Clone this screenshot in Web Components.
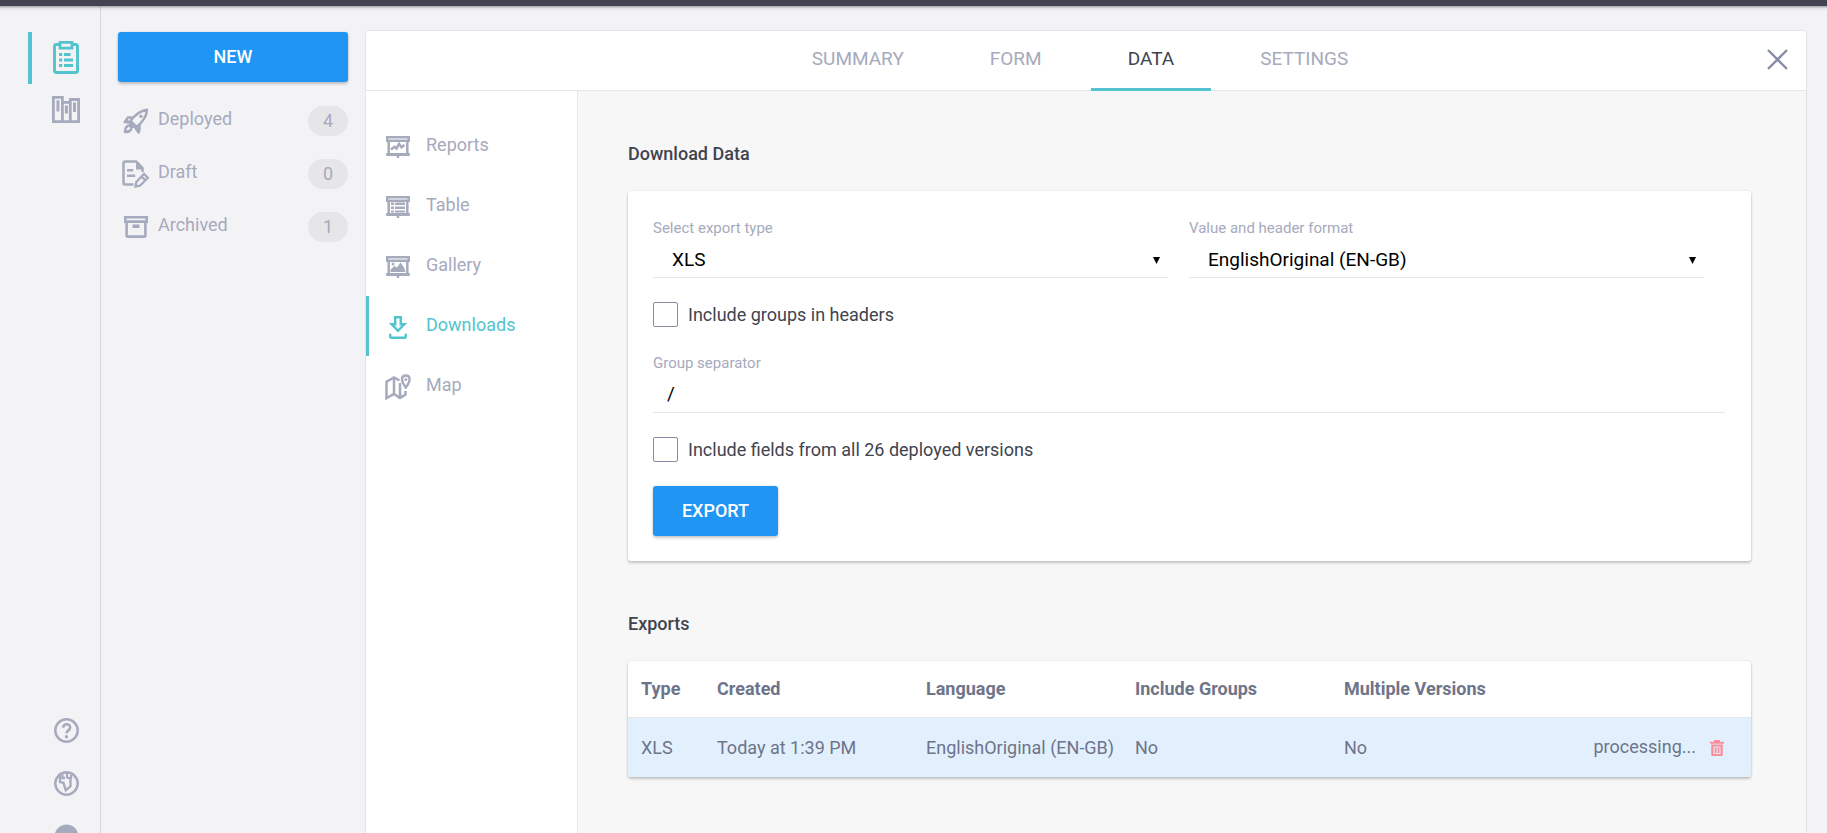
<!DOCTYPE html>
<html lang="en">
<head>
<meta charset="utf-8">
<title>Data – Downloads</title>
<style>
  :root {
    --teal: #52c4cd;
    --blue: #2095f3;
    --muted: #a6aabd;
    --ink: #40444f;
    --slate: #6e748a;
    --line: #e5e6e9;
    --shadow: 0 0 2px rgba(0, 0, 0, .12), 0 2px 3px rgba(0, 0, 0, .2);
  }
  body {
    margin: 0;
    font: 18px/24px Roboto, "Liberation Sans", sans-serif;
    color: var(--ink);
    background: #f3f3f6;
    overflow: hidden;
  }
</style>
</head>
<body>
<app-shell>
  <app-rail slot="rail"></app-rail>
  <form-sidebar slot="sidebar">
    <status-link icon="rocket" count="4">Deployed</status-link>
    <status-link icon="draft" count="0">Draft</status-link>
    <status-link icon="archive" count="1">Archived</status-link>
  </form-sidebar>
  <tab-bar slot="tabs"></tab-bar>
  <side-nav slot="nav">
    <side-link icon="reports">Reports</side-link>
    <side-link icon="table">Table</side-link>
    <side-link icon="gallery">Gallery</side-link>
    <side-link icon="download" active>Downloads</side-link>
    <side-link icon="map">Map</side-link>
  </side-nav>
  <content-section heading="Download Data"><export-form></export-form></content-section>
  <content-section heading="Exports"><exports-table></exports-table></content-section>
</app-shell>

<script>
const board = '<path d="M1.200 1.200h21.600v3.600H1.200zM2.700 4.500V19M21.300 4.500V19" fill="none" stroke="currentColor" stroke-width="2.500"/><path d="M.2 17h23.600v3H13.200v2h-2.400v-2H.2z"/>';
const ICONS = {
  clipboard: [26, 33, '<path d="M7 3.500H3.500Q1.500 3.500 1.500 5.500v24q0 2 2 2h19q2 0 2-2v-24q0-2-2-2H19" fill="none" stroke="currentColor" stroke-width="2.900"/><path d="M7 1.400h12v5.800H7z" fill="none" stroke="currentColor" stroke-width="2.800"/><path d="M6 12h3.200v3H6zm5 0h6.500v3H11zM6 17.500h3.200v3H6zm5 0h9v3h-9zM6 23h3.200v3H6zm5 0h9v3h-9z"/>'],
  library: [28, 27, '<path d="M1.400 1.400h9v24.200h-9zM10.400 6.300h7.900v19.300h-7.900zM18.300 3.500h8.300v22.100h-8.300z" fill="none" stroke="currentColor" stroke-width="2.800"/><path d="M4.500 4.200h2.900v11.300H4.500zM12.900 9.500h3v8h-3zM21 6.500h3v9.500h-3z"/>'],
  help: [25, 25, '<circle cx="12.500" cy="12.500" r="11.200" fill="none" stroke="currentColor" stroke-width="2.500"/><path d="M9.200 9.700q0-3.400 3.500-3.400t3.400 3.200q0 1.600-1.800 2.900t-1.700 3" fill="none" stroke="currentColor" stroke-width="2.600"/><circle cx="12.500" cy="18.700" r="1.700"/>'],
  globe: [25, 25, '<circle cx="12.500" cy="12.500" r="11.200" fill="none" stroke="currentColor" stroke-width="2.500"/><path d="M6 4.500V11l3.500.8 2.300 7.500 4.700-4V7.500L13 6.500V2M8.500 3.500V7h2.500M17 4v4" fill="none" stroke="currentColor" stroke-width="2.300"/>'],
  dot: [25, 25, '<circle cx="12.500" cy="12.500" r="12"/>'],
  rocket: [26, 26, '<path d="M7.500 13Q14.500 3 24 1.700 23.500 11 13.500 19zM9.500 9.500H5L1.700 14l5 .5M16.500 17v4l-.8 3.500-3.500-5M5.500 16.500l4 4M5 17.500q-3 2-3 6.500 4.500.2 6.500-3M3 12l12.500 10" fill="none" stroke="currentColor" stroke-width="2.500" stroke-linejoin="round"/><circle cx="18" cy="8.300" r="1.700"/>'],
  draft: [28, 28, '<path d="M20.500 12V8.500L14 1.500H3q-1.500 0-1.500 1.500v20q0 1.500 1.500 1.500h8.500" fill="none" stroke="currentColor" stroke-width="2.500"/><path d="M14 1h1.500l6 6.500V9.500H14zM5 9h6.200v2.500H5zM5 14.500h8.200V17H5z"/><path d="M13.500 26.500l.8-4.500 7.700-8 3.800 3.700-7.800 8zM19.500 16.500l3.800 3.700" fill="none" stroke="currentColor" stroke-width="2.300"/>'],
  archive: [24, 22, '<path d="M1.300 1.300h21.400v4.300H1.300zM2.600 5.500v13.800q0 1.300 1.300 1.300h16.200q1.300 0 1.300-1.300V5.500" fill="none" stroke="currentColor" stroke-width="2.600"/><path d="M8.500 8.500h7v3.500h-7z"/>'],
  reports: [24, 22, board + '<path d="M5 13.500l3.500-2.700 2 1.700 2.500-4.700 2.500 3.500L18.500 9" fill="none" stroke="currentColor" stroke-width="2.500"/>'],
  table: [24, 22, board + '<path d="M5 6.500h3V9H5zm4 0h10V9H9zm-4 4h3V13H5zm4 0h10V13H9zm-4 4h3v2H5zm4 0h10v2H9z"/>'],
  gallery: [24, 22, board + '<path d="M4.500 16v-2.500l4-3.500 2.500 1.500L14.500 6.500l3.500 5 1.500 4.500z"/><circle cx="7" cy="8" r="1.500"/>'],
  download: [18, 23, '<path d="M6.200 1.300h5.600v7h3.500L9 14.800 2.700 8.300h3.500z" fill="none" stroke="currentColor" stroke-width="2.500"/><path d="M1.200 17.700v2.500q0 1.500 1.500 1.500h12.600q1.500 0 1.500-1.500v-2.500" fill="none" stroke="currentColor" stroke-width="2.400"/>'],
  map: [26, 26, '<path d="M14.500 6.500L9 3.500 1.500 7.700v16.500L9 20l6 4 5.500-3.500V17M9 3.500V20M15 9v15" fill="none" stroke="currentColor" stroke-width="2.500"/><path d="M20.800 13.500Q17 8.500 17 5.300 17 1.500 20.800 1.500t3.800 3.800q0 3.200-3.800 8.200z" fill="none" stroke="currentColor" stroke-width="2.400"/><circle cx="20.800" cy="5.500" r="1.500"/>'],
  close: [21, 21, '<path d="M1 1l19 19M20 1L1 20" stroke="currentColor" stroke-width="2.300"/>'],
  trash: [14, 16, '<path d="M0 1.700h4V0h6v1.700h4v2H0zM1.200 4.500h11.600v10q0 1.500-1.500 1.500H2.700q-1.500 0-1.500-1.500zM3.500 6.500V14h7V6.500z" fill-rule="evenodd"/><path d="M4.700 7.300h1.800v5.900H4.700zm2.900 0h1.800v5.900H7.600z"/>']
};

function define(name, render) {
  customElements.define(name, class extends HTMLElement {
    connectedCallback() {
      if (this.shadowRoot) return;
      const template = document.createElement('template');
      template.innerHTML = render(this);
      this.attachShadow({ mode: 'open' }).append(template.content.cloneNode(true));
    }
  });
}

define('ui-icon', el => {
  const [w, h, body] = ICONS[el.getAttribute('name')];
  return `<style>:host{display:inline-flex;flex:none}svg{display:block}</style>
    <svg width="${w}" height="${h}" viewBox="0 0 ${w} ${h}" fill="currentColor" aria-hidden="true">${body}</svg>`;
});

define('app-shell', () => `
  <style>
    :host { display: flex; height: 100vh; border-top: 6px solid #424453; box-sizing: border-box; position: relative; }
    .top-shadow { position: absolute; inset: 0 0 auto; height: 5px; background: linear-gradient(rgba(0,0,0,.32), rgba(0,0,0,.06) 50%, transparent); }
    .panel { flex: 1; min-width: 0; margin: 25px 21px 0 0; display: grid; grid-template: auto 1fr / 212px 1fr;
      background: #f7f7f8; border-radius: 3px 3px 0 0; box-shadow: 0 0 2px rgba(0, 0, 0, .2); overflow: hidden; }
    .tabs { grid-column: 1 / -1; }
    main { padding: 51px 55px 0 50px; min-width: 0; display: flex; flex-direction: column; gap: 51px; }
  </style>
  <div class="top-shadow"></div>
  <slot name="rail"></slot>
  <slot name="sidebar"></slot>
  <div class="panel">
    <div class="tabs"><slot name="tabs"></slot></div>
    <slot name="nav"></slot>
    <main><slot></slot></main>
  </div>`);

define('app-rail', () => `
  <style>
    :host { display: flex; flex-direction: column; justify-content: space-between; width: 100px; flex: none;
      border-right: 1px solid #d6d7da; overflow: hidden; color: var(--muted); }
    nav { display: flex; flex-direction: column; padding: 26px 0 0 28px; }
    a { display: flex; align-items: center; justify-content: center; height: 52px; box-sizing: border-box; padding-bottom: 2px; color: inherit; border-left: 4px solid transparent; }
    a.active { color: var(--teal); border-color: var(--teal); }
    nav.foot { padding-top: 0; margin-bottom: -31px; }
    .foot a { height: 53px; }
  </style>
  <nav>
    <a class="active" href="#projects" aria-label="Projects"><ui-icon name="clipboard"></ui-icon></a>
    <a href="#library" aria-label="Library"><ui-icon name="library"></ui-icon></a>
  </nav>
  <nav class="foot">
    <a href="#help" aria-label="Help"><ui-icon name="help"></ui-icon></a>
    <a href="#web" aria-label="Website"><ui-icon name="globe"></ui-icon></a>
    <a href="#source" aria-label="Source"><ui-icon name="dot"></ui-icon></a>
  </nav>`);

define('form-sidebar', () => `
  <style>
    :host { display: flex; flex-direction: column; gap: 24px; width: 230px; flex: none; padding: 26px 18px 0 17px; }
    button { height: 50px; padding: 0 0 2px; border: 0; border-radius: 3px; background: var(--blue); color: #fff; font: 500 18px Roboto, sans-serif; box-shadow: var(--shadow); }
    nav { display: flex; flex-direction: column; gap: 23px; }
  </style>
  <button type="button">NEW</button>
  <nav><slot></slot></nav>`);

define('status-link', el => `
  <style>
    :host { display: block; }
    a { display: flex; align-items: center; height: 30px; color: var(--muted); text-decoration: none; }
    .icon { width: 36px; margin-right: 4px; display: flex; justify-content: center; }
    .text { flex: 1; padding-bottom: 4px; }
    .count { width: 40px; line-height: 30px; border-radius: 15px; background: #e6e6e8; text-align: center; }
  </style>
  <a href="#list"><span class="icon"><ui-icon name="${el.getAttribute('icon')}"></ui-icon></span>
  <span class="text"><slot></slot></span><span class="count">${el.getAttribute('count')}</span></a>`);

define('tab-bar', () => `
  <style>
    :host { display: flex; align-items: stretch; height: 60px; box-sizing: border-box; background: #fff; box-shadow: inset 0 -1px var(--line); position: relative; }
    nav { flex: 1; display: flex; justify-content: center; }
    a { padding: 0 37px; margin-right: 12px; line-height: 56px; font-size: 19px; color: var(--muted); text-decoration: none; border-bottom: 3px solid transparent; }
    a.active { color: var(--ink); border-color: var(--teal); }
    button { position: absolute; right: 14px; top: 13px; width: 30px; height: 30px; padding: 0; border: 0; background: none; color: #868ca6; display: grid; place-items: center; }
  </style>
  <nav>
    <a href="#summary">SUMMARY</a><a href="#form">FORM</a><a class="active" href="#data">DATA</a><a href="#settings">SETTINGS</a>
  </nav>
  <button type="button" aria-label="Close"><ui-icon name="close"></ui-icon></button>`);

define('side-nav', () => `
  <style>:host { display: block; padding-top: 25px; background: #fff; border-right: 1px solid var(--line); }</style>
  <nav><slot></slot></nav>`);

define('side-link', el => `
  <style>
    :host { display: block; color: var(--muted); }
    a { display: flex; align-items: center; height: 60px; box-sizing: border-box; border-left: 3px solid transparent; padding-left: 11px; color: inherit; text-decoration: none; }
    :host([active]) { color: var(--teal); }
    :host([active]) a { border-color: var(--teal); }
    .icon { width: 36px; margin-right: 10px; display: flex; justify-content: center; padding-top: 2px; }
    .text { padding-bottom: 3px; }
  </style>
  <a href="#${el.getAttribute('icon')}"><span class="icon"><ui-icon name="${el.getAttribute('icon')}"></ui-icon></span><span class="text"><slot></slot></span></a>`);

define('content-section', el => `
  <style>
    :host { display: block; }
    h2 { margin: 0 0 25px; font-size: 18px; font-weight: 500; line-height: 24px; }
    .card { background: #fff; border-radius: 3px; box-shadow: var(--shadow); overflow: hidden; }
  </style>
  <section><h2>${el.getAttribute('heading')}</h2><div class="card"><slot></slot></div></section>`);

define('export-form', () => `
  <style>
    :host { display: block; padding: 25px; }
    form { display: flex; flex-direction: column; gap: 24px; padding-right: 1px; }
    .row { display: flex; gap: 2%; }
    .row .field { width: 48%; }
    .field { display: flex; flex-direction: column; }
    .field label { font-size: 15px; line-height: 24px; color: var(--muted); }
    select, input[type=text] { appearance: none; height: 38px; box-sizing: border-box; width: 100%; margin: 0; border: 0; border-bottom: 1px solid var(--line);
      border-radius: 0; background: none; color: #000; font: 19px Roboto, sans-serif; outline: 0; }
    select { padding: 2px 19px 0; }
    input[type=text] { padding: 0 14px; }
    .pick { display: grid; }
    .pick > * { grid-area: 1 / 1; }
    .pick svg { place-self: center end; margin-right: 8px; padding-top: 2px; pointer-events: none; }
    .check { display: flex; align-items: center; align-self: flex-start; gap: 10px; line-height: 25px; }
    .check input { appearance: none; width: 25px; height: 25px; margin: 0; box-sizing: border-box; border: 1px solid #868ca6; border-radius: 2px; background: #fff; }
    button { align-self: flex-start; width: 125px; height: 50px; padding: 0 0 2px; border: 0; border-radius: 3px; background: var(--blue); color: #fff; font: 500 18px Roboto, sans-serif; box-shadow: var(--shadow); }
  </style>
  <form>
    <div class="row">
      <div class="field"><label for="type">Select export type</label>
        <div class="pick"><select id="type"><option>XLS</option></select><svg width="7" height="7"><path d="M0 0h7L3.500 7z"/></svg></div></div>
      <div class="field"><label for="format">Value and header format</label>
        <div class="pick"><select id="format"><option>EnglishOriginal (EN-GB)</option></select><svg width="7" height="7"><path d="M0 0h7L3.500 7z"/></svg></div></div>
    </div>
    <label class="check"><input type="checkbox">Include groups in headers</label>
    <div class="field"><label for="sep">Group separator</label><input id="sep" type="text" value="/"></div>
    <label class="check"><input type="checkbox">Include fields from all 26 deployed versions</label>
    <button type="button">EXPORT</button>
  </form>`);

define('exports-table', () => `
  <style>
    :host { display: block; }
    table { width: 100%; border-collapse: collapse; table-layout: fixed; color: var(--slate); }
    th, td { text-align: left; padding: 0 0 0 13px; white-space: nowrap; box-sizing: border-box; }
    th { height: 56px; font-weight: 700; border-bottom: 1px solid var(--line); }
    td { height: 60px; padding-top: 2px; background: #e2f0fe; }
    .type { width: 76px; }
    .wide { width: 209px; }
    td:last-child { padding: 0 27px 0 0; }
    .actions { display: flex; justify-content: flex-end; align-items: center; gap: 14px; }
    button { display: flex; padding: 2px 0 0; border: 0; background: none; color: #fb8e9c; }
  </style>
  <table>
    <thead><tr><th class="type">Type</th><th class="wide">Created</th><th class="wide">Language</th><th class="wide">Include Groups</th><th class="wide">Multiple Versions</th><th aria-label="Actions"></th></tr></thead>
    <tbody><tr><td>XLS</td><td>Today at 1:39 PM</td><td>EnglishOriginal (EN-GB)</td><td>No</td><td>No</td>
      <td><div class="actions">processing...<button type="button" aria-label="Delete export"><ui-icon name="trash"></ui-icon></button></div></td></tr></tbody>
  </table>`);
</script>
</body>
</html>
